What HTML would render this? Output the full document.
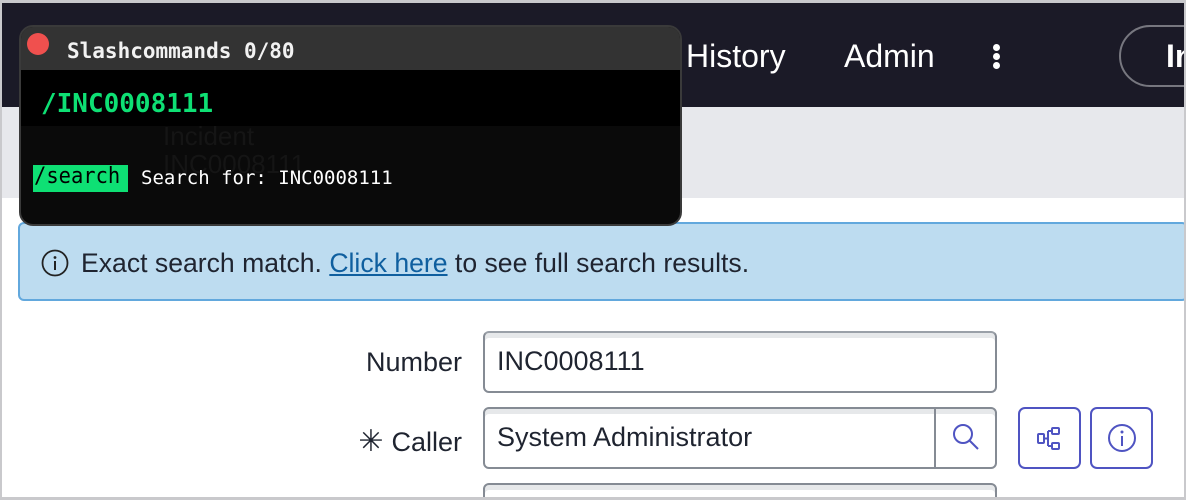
<!DOCTYPE html>
<html><head><meta charset="utf-8"><style>
*{margin:0;padding:0;box-sizing:border-box}
html{width:1186px;height:500px;overflow:hidden}
body{width:1186px;height:500px;overflow:hidden;background:#fff;position:relative;font-family:"Liberation Sans",sans-serif}
.abs{position:absolute}
.mono{font-family:"DejaVu Sans Mono","Liberation Mono",monospace}
</style></head><body>
<div class="abs" style="left:0;top:0;width:1186px;height:3px;background:#c9c9cc"></div>
<div class="abs" style="left:0;top:0;width:2px;height:500px;background:#c9c9cc"></div>
<div class="abs" style="left:2px;top:3px;width:1182px;height:104px;background:#1b1a27"></div>
<div class="abs" style="left:2px;top:107px;width:1182px;height:91px;background:#e7e8ec"></div>
<div class="abs" style="left:686px;top:38px;color:#fff;font-size:32px">History</div>
<div class="abs" style="left:844px;top:38px;color:#fff;font-size:32px">Admin</div>
<div class="abs" style="left:993px;top:44px;width:8px">
<div style="width:7px;height:7px;border-radius:50%;background:#fff;margin-bottom:2px"></div>
<div style="width:7px;height:7px;border-radius:50%;background:#fff;margin-bottom:2px"></div>
<div style="width:7px;height:7px;border-radius:50%;background:#fff"></div></div>
<div class="abs" style="left:1119px;top:25px;width:120px;height:62px;border:2px solid #77777f;border-radius:31px"></div>
<div class="abs" style="left:1166px;top:38px;color:#fff;font-size:32px;font-weight:bold">In</div>

<div class="abs" style="left:18px;top:222px;width:1170px;height:79px;background:#bddcf0;border:2px solid #62a8dd;border-radius:6px"></div>
<svg class="abs" style="left:41px;top:249px" width="28" height="28" viewBox="0 0 28 28"><circle cx="14" cy="14" r="12.5" fill="none" stroke="#222" stroke-width="1.8"/><circle cx="14" cy="8.5" r="1.4" fill="#222"/><rect x="13" y="12" width="2" height="9" fill="#222"/></svg>
<div class="abs" style="left:81px;top:248px;font-size:26.6px;color:#1f2430">Exact search match. <span style="color:#0f5f9f;text-decoration:underline">Click here</span> to see full search results.</div>

<div class="abs" style="left:300px;top:347px;width:162px;text-align:right;font-size:27px;color:#1f2430">Number</div>
<div class="abs" style="left:483px;top:331px;width:514px;height:62px;border:2px solid #858b94;border-radius:6px;border-top-color:#9aa0a8;box-shadow:inset 0 5px 0 #e6e8ea"></div>
<div class="abs" style="left:497px;top:346px;font-size:27px;color:#1f2430">INC0008111</div>
<div class="abs" style="left:300px;top:424px;width:162px;text-align:right;font-size:27px;color:#1f2430"><span style="font-size:30px;margin-right:8px">✳︎</span>Caller</div>
<div class="abs" style="left:483px;top:407px;width:514px;height:62px;border:2px solid #858b94;border-radius:6px;box-shadow:inset 0 5px 0 #e6e8ea"></div>
<div class="abs" style="left:934px;top:409px;width:2px;height:58px;background:#858b94"></div>
<div class="abs" style="left:497px;top:422px;font-size:27px;color:#1f2430">System Administrator</div>
<svg class="abs" style="left:950px;top:422px" width="32" height="32" viewBox="0 0 32 32"><circle cx="13" cy="12" r="9" fill="none" stroke="#4f54c2" stroke-width="2"/><line x1="19.5" y1="18.5" x2="28" y2="27" stroke="#4f54c2" stroke-width="2"/></svg>
<div class="abs" style="left:1018px;top:407px;width:63px;height:62px;border:2px solid #4f54c2;border-radius:7px"></div>
<svg class="abs" style="left:1036px;top:425px" width="28" height="28" viewBox="0 0 28 28" fill="none" stroke="#4f54c2" stroke-width="2"><rect x="2" y="9" width="6" height="9" rx="1"/><rect x="16" y="3" width="7" height="6" rx="1"/><rect x="16" y="18" width="7" height="6" rx="1"/><path d="M8 13.5h4M12 6v15M12 6h4M12 21h4"/></svg>
<div class="abs" style="left:1090px;top:407px;width:63px;height:62px;border:2px solid #4f54c2;border-radius:7px"></div>
<svg class="abs" style="left:1106px;top:422px" width="32" height="32" viewBox="0 0 32 32"><circle cx="16" cy="16" r="13" fill="none" stroke="#4f54c2" stroke-width="2"/><circle cx="16" cy="10" r="1.5" fill="#4f54c2"/><rect x="15" y="14" width="2" height="10" fill="#4f54c2"/></svg>
<div class="abs" style="left:483px;top:483px;width:514px;height:40px;border:2px solid #858b94;border-radius:6px;box-shadow:inset 0 5px 0 #e6e8ea"></div>
<div class="abs" style="left:0;top:497px;width:1186px;height:3px;background:#c9c9cc"></div>
<div class="abs" style="right:0;top:0;width:2px;height:500px;background:#c9c9cc"></div>

<!-- popup -->
<div class="abs" style="left:19px;top:25px;width:663px;height:201px;background:#0a0a0a;border:2px solid #3a3a3a;border-radius:14px;overflow:hidden">
<div style="height:43px;background:#333"></div>
<div style="height:56px;background:#000"></div>
</div>
<div class="abs" style="left:27px;top:33px;width:22px;height:22px;border-radius:50%;background:#f0504e"></div>
<div class="abs mono" style="left:67px;top:39px;color:#f2f2f2;font-size:21px;font-weight:bold">Slashcommands 0/80</div>
<div class="abs mono" style="left:41px;top:89px;color:#0ee074;font-size:26px;font-weight:bold">/INC0008111</div>
<div class="abs" style="left:163px;top:122px;color:#151515;font-size:26px;line-height:28px">Incident<br>INC0008111</div>
<div class="abs" style="left:33px;top:165px;width:95px;height:27px;background:#0ee074"></div>
<div class="abs mono" style="left:34px;top:164px;color:#000;font-size:22px;transform:scaleX(0.93);transform-origin:left">/search</div>
<div class="abs mono" style="left:141px;top:167px;color:#fff;font-size:19px">Search for: INC0008111</div>
</body></html>
